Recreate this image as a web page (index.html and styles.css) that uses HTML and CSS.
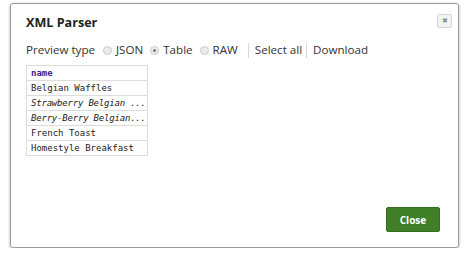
FILE: index.html
```html
<!DOCTYPE html>
<html lang="en">
<head>
    <meta charset="UTF-8">
    <title>XML Parser</title>
    <link rel="stylesheet" href="styles.css">
</head>
<body>
    <div class="dialog">
        <div class="dialog-header">
            <h1>XML Parser</h1>
            <span class="close-x">&#x2716;</span>
        </div>
        <div class="dialog-body">
            <div class="toolbar">
                <span class="label">Preview type</span>
                <span class="radio"></span><span class="opt">JSON</span>
                <span class="radio checked"></span><span class="opt">Table</span>
                <span class="radio"></span><span class="opt">RAW</span>
                <span class="sep"></span>
                <span class="link">Select all</span>
                <span class="sep"></span>
                <span class="link">Download</span>
            </div>
            <table class="preview">
                <tr><th>name</th></tr>
                <tr><td>Belgian Waffles</td></tr>
                <tr><td class="cut">Strawberry Belgian ...</td></tr>
                <tr><td class="cut">Berry-Berry Belgian...</td></tr>
                <tr><td>French Toast</td></tr>
                <tr><td>Homestyle Breakfast</td></tr>
            </table>
        </div>
        <div class="dialog-footer">
            <button class="btn-close">Close</button>
        </div>
    </div>
</body>
</html>
```

FILE: styles.css
```css
body {
    margin: 0;
    font-family: "Open Sans", Arial, sans-serif;
    color: #333;
    background: #fff;
}
.dialog {
    margin: 3px 0 0 10px;
    width: 447px;
    height: 243px;
    border: 1px solid #9a9a9a;
    border-radius: 3px;
    box-shadow: 0 1px 3px rgba(0, 0, 0, 0.35);
    display: flex;
    flex-direction: column;
    box-sizing: content-box;
}
.dialog-header {
    display: flex;
    justify-content: space-between;
    align-items: flex-start;
    padding: 10px 6px 0 15px;
}
.dialog-header h1 {
    margin: 0;
    font-size: 12.6px;
    font-weight: bold;
    color: #222;
    line-height: 18px;
}
.close-x {
    width: 13px;
    height: 12px;
    border: 1px solid #d6d6d6;
    border-radius: 2px;
    background: #f3f3f3;
    color: #888;
    font-size: 7px;
    line-height: 12px;
    text-align: center;
}
.dialog-body {
    flex: 1;
    padding: 0 15px;
}
.toolbar {
    display: flex;
    align-items: center;
    margin-top: 10px;
    font-size: 11.6px;
    line-height: 16px;
    color: #333;
}
.label {
    margin-right: 7px;
}
.radio {
    width: 7px;
    height: 7px;
    border: 1px solid #c8c8c8;
    border-radius: 50%;
    background: #ececec;
    margin-right: 4px;
    margin-left: 1px;
    position: relative;
}
.radio.checked::after {
    content: "";
    position: absolute;
    left: 2px;
    top: 2px;
    width: 3px;
    height: 3px;
    border-radius: 50%;
    background: #777;
}
.opt {
    margin-right: 6px;
}
.sep {
    width: 1px;
    height: 15px;
    background: #d8d8d8;
    margin: 0 6px 0 4px;
}
.preview {
    margin-top: 7px;
    border-collapse: collapse;
    width: 122px;
    table-layout: fixed;
    font-family: "DejaVu Sans Mono", monospace;
    font-size: 9px;
}
.preview th,
.preview td {
    border: 1px solid #dcdcdc;
    height: 14px;
    padding: 0 0 0 4px;
    text-align: left;
    white-space: nowrap;
    overflow: hidden;
    color: #222;
    line-height: 13px;
}
.preview th {
    color: #3a1f8c;
    font-weight: bold;
}
.preview td.cut {
    font-style: italic;
    letter-spacing: -0.2px;
}
.dialog-footer {
    display: flex;
    justify-content: flex-end;
    padding: 0 18px 15px 0;
}
.btn-close {
    width: 54px;
    height: 25px;
    border: 1px solid #356e22;
    border-radius: 2px;
    background: #3e7f27;
    color: #fff;
    font-family: "Open Sans", Arial, sans-serif;
    font-size: 10px;
    font-weight: bold;
    padding: 0;
}
```
